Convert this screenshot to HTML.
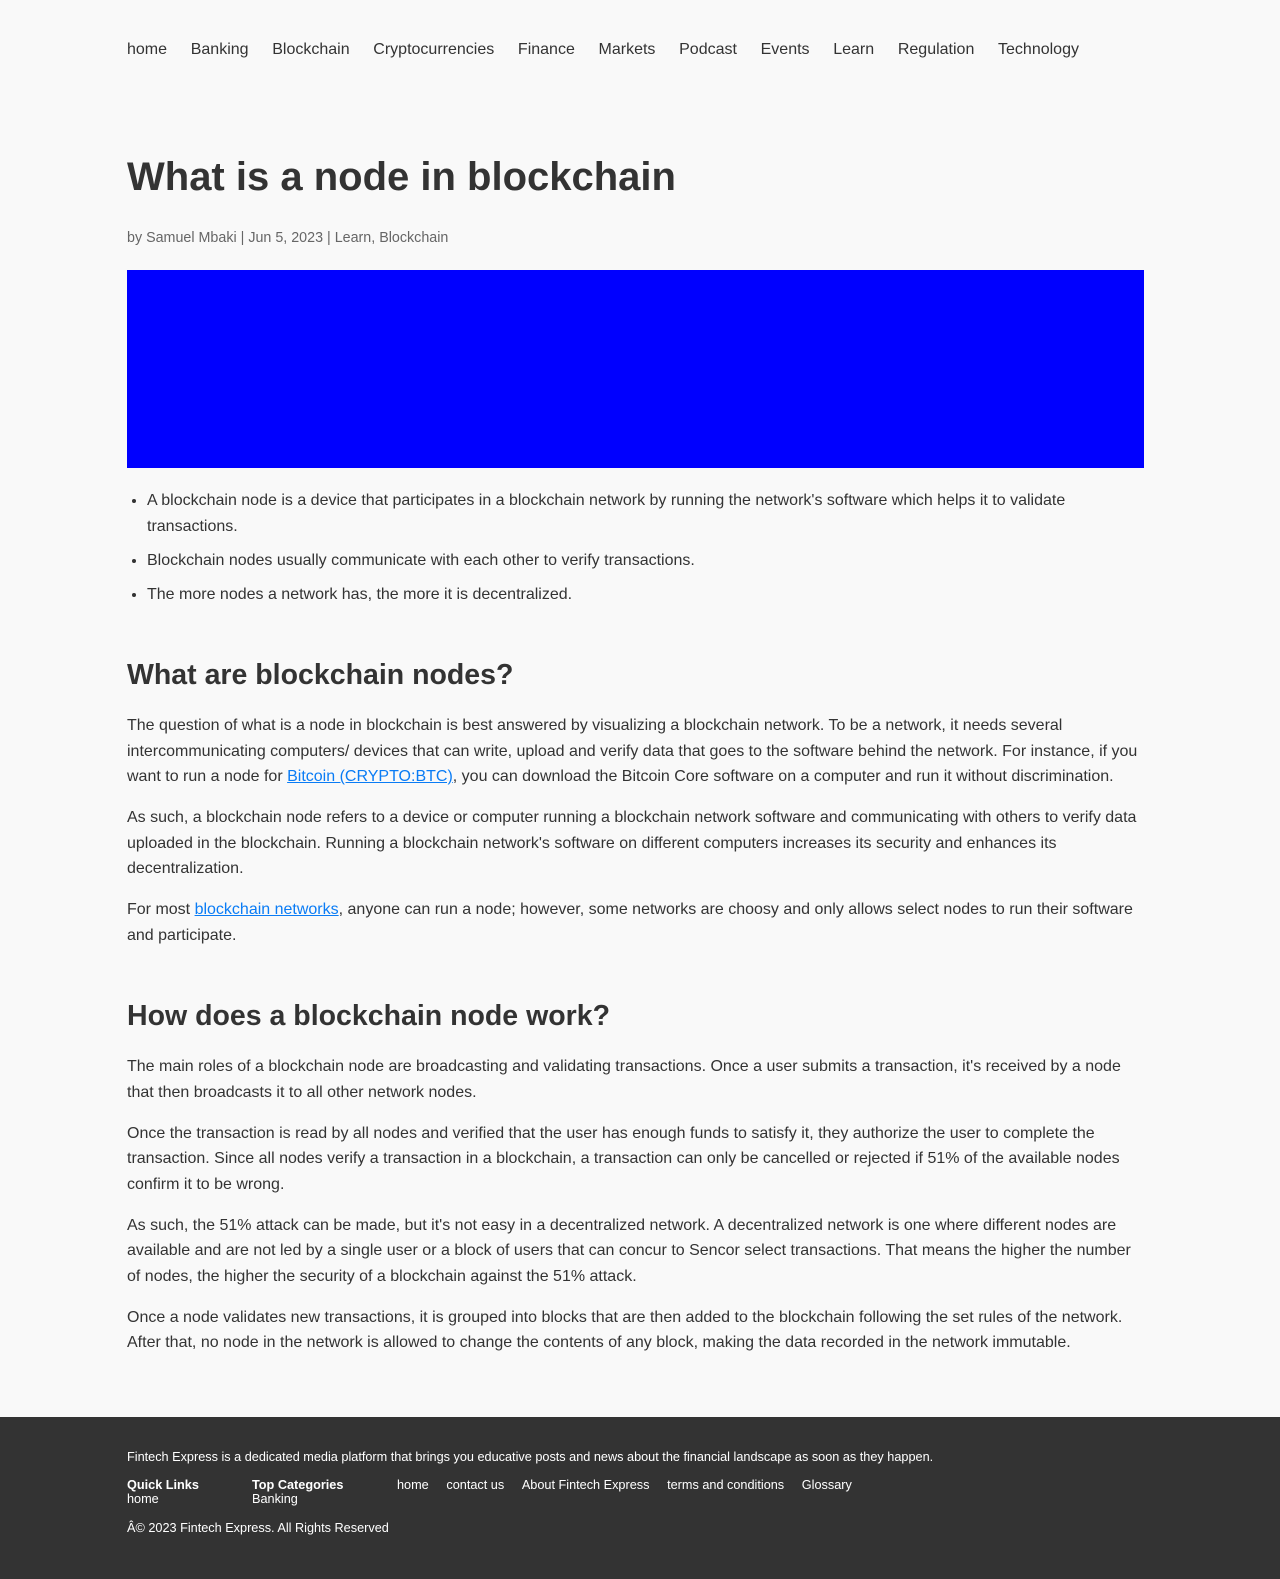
<!DOCTYPE html>
<html><head><meta charset="utf-8"><style>
*{margin:0;padding:0;box-sizing:border-box}
body{background:#f9f9f9;font-family:"Liberation Sans",Arial,sans-serif;color:#333;width:1280px;height:1579px;position:relative;overflow:hidden}
.wrap{position:absolute;left:127px;width:1017px}
nav{position:absolute;left:127px;top:41px;font-size:16px;color:#333}
nav span{margin-right:23.7px}
h1{position:absolute;left:127px;top:151px;font-size:40px;font-weight:bold;line-height:52px;color:#333}
.meta{position:absolute;left:127px;top:230px;font-size:14.3px;color:#666}
.img{position:absolute;left:127px;top:270px;width:1017px;height:198px;background:#0000ff}
.content{top:488px;font-size:16px;line-height:25.5px}
ul{padding-left:20px;margin-bottom:50px}
li{margin-bottom:8.5px}
h2{font-size:28.5px;line-height:36px;font-weight:bold;margin-bottom:20px}
p{margin-bottom:15.5px}
a{color:#0a7cf5;text-decoration:underline}
footer{position:absolute;left:0;top:1417px;width:1280px;height:162px;background:#333;color:#fff;font-size:12.7px}
footer div{position:absolute}
</style></head><body>
<nav><span>home</span><span>Banking</span><span>Blockchain</span><span>Cryptocurrencies</span><span>Finance</span><span>Markets</span><span>Podcast</span><span>Events</span><span>Learn</span><span>Regulation</span><span>Technology</span></nav>
<h1>What is a node in blockchain</h1>
<div class="meta">by Samuel Mbaki | Jun 5, 2023 | Learn, Blockchain</div>
<div class="img"></div>
<div class="wrap content">
<ul>
<li>A blockchain node is a device that participates in a blockchain network by running the network's software which helps it to validate transactions.</li>
<li>Blockchain nodes usually communicate with each other to verify transactions.</li>
<li>The more nodes a network has, the more it is decentralized.</li>
</ul>
<h2>What are blockchain nodes?</h2>
<p>The question of what is a node in blockchain is best answered by visualizing a blockchain network. To be a network, it needs several intercommunicating computers/ devices that can write, upload and verify data that goes to the software behind the network. For instance, if you want to run a node for <a>Bitcoin (CRYPTO:BTC)</a>, you can download the Bitcoin Core software on a computer and run it without discrimination.</p>
<p>As such, a blockchain node refers to a device or computer running a blockchain network software and communicating with others to verify data uploaded in the blockchain. Running a blockchain network's software on different computers increases its security and enhances its decentralization.</p>
<p style="margin-bottom:50px">For most <a>blockchain networks</a>, anyone can run a node; however, some networks are choosy and only allows select nodes to run their software and participate.</p>
<h2>How does a blockchain node work?</h2>
<p>The main roles of a blockchain node are broadcasting and validating transactions. Once a user submits a transaction, it's received by a node that then broadcasts it to all other network nodes.</p>
<p>Once the transaction is read by all nodes and verified that the user has enough funds to satisfy it, they authorize the user to complete the transaction. Since all nodes verify a transaction in a blockchain, a transaction can only be cancelled or rejected if 51% of the available nodes confirm it to be wrong.</p>
<p>As such, the 51% attack can be made, but it's not easy in a decentralized network. A decentralized network is one where different nodes are available and are not led by a single user or a block of users that can concur to Sencor select transactions. That means the higher the number of nodes, the higher the security of a blockchain against the 51% attack.</p>
<p>Once a node validates new transactions, it is grouped into blocks that are then added to the blockchain following the set rules of the network. After that, no node in the network is allowed to change the contents of any block, making the data recorded in the network immutable.</p>
</div>
<footer>
<div style="left:127px;top:33px">Fintech Express is a dedicated media platform that brings you educative posts and news about the financial landscape as soon as they happen.</div>
<div style="left:127px;top:61px;line-height:14px"><b>Quick Links</b><br>home</div>
<div style="left:252px;top:61px;line-height:14px"><b>Top Categories</b><br>Banking</div>
<div style="left:397px;top:61px;line-height:14px">home&nbsp;&nbsp;&nbsp;&nbsp;&nbsp;contact us&nbsp;&nbsp;&nbsp;&nbsp;&nbsp;About Fintech Express&nbsp;&nbsp;&nbsp;&nbsp;&nbsp;terms and conditions&nbsp;&nbsp;&nbsp;&nbsp;&nbsp;Glossary</div>
<div style="left:127px;top:104px">Â© 2023 Fintech Express. All Rights Reserved</div>
</footer>
</body></html>
